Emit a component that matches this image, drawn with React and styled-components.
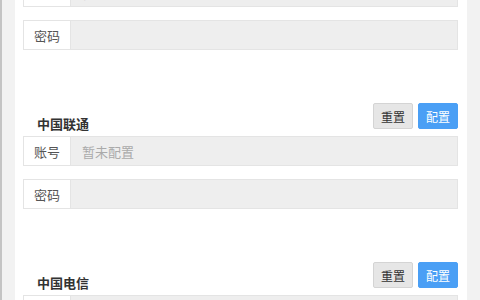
import styled, { createGlobalStyle } from "styled-components";

const Global = createGlobalStyle`
  html, body {
    margin: 0;
    padding: 0;
    background: #f2f2f2;
    overflow: hidden;
  }
  body {
    font-family: "Noto Sans CJK SC", "Noto Sans", sans-serif;
  }
`;

const Frame = styled.div`
  display: flex;
  height: 300px;
  width: 480px;
  overflow: hidden;
  border-left: 2px solid #c4c4c4;
  box-sizing: border-box;
`;

const Gutter = styled.div`
  width: ${(p) => p.$w}px;
  flex-shrink: 0;
  background: #f2f2f2;
`;

const Panel = styled.div`
  flex: 1;
  background: #fff;
  padding: 0 9px 0 8px;
  overflow: hidden;
`;

const Scroll = styled.div`
  margin-top: -56px;
  display: flex;
  flex-direction: column;
  gap: 53px;
`;

const Section = styled.div`
  display: flex;
  flex-direction: column;
`;

const Header = styled.div`
  display: flex;
  align-items: flex-end;
  justify-content: space-between;
  height: 26px;
  margin-bottom: 7px;
`;

const Title = styled.div`
  font-size: 13px;
  font-weight: bold;
  color: #333;
  padding-left: 14px;
  line-height: 16px;
  margin-bottom: -3px;
`;

const Buttons = styled.div`
  display: flex;
  gap: 5px;
`;

const Button = styled.button`
  width: 40px;
  height: 26px;
  padding: 0;
  border-radius: 2px;
  font-family: inherit;
  font-size: 12px;
  border: 1px solid ${(p) => (p.$primary ? "#4a9ff5" : "#d4d4d4")};
  background: ${(p) => (p.$primary ? "#4a9ff5" : "#e6e6e6")};
  color: ${(p) => (p.$primary ? "#fff" : "#333")};
`;

const Rows = styled.div`
  display: flex;
  flex-direction: column;
  gap: 13px;
`;

const Row = styled.div`
  display: flex;
  height: 30px;
  border: 1px solid #e4e4e4;
  box-sizing: border-box;
`;

const Label = styled.div`
  width: 46px;
  display: flex;
  align-items: center;
  justify-content: center;
  font-size: 13px;
  color: #555;
  background: #fff;
  border-right: 1px solid #e4e4e4;
`;

const Field = styled.div`
  flex: 1;
  display: flex;
  align-items: center;
  padding-left: 11px;
  background: #eeeeee;
  font-size: 13px;
  color: #aaa;
`;

const carriers = ["中国移动", "中国联通", "中国电信"];

export default function App() {
  return (
    <>
      <Global />
      <Frame>
        <Gutter $w={13} />
        <Panel>
          <Scroll>
            {carriers.map((name) => (
              <Section key={name}>
                <Header>
                  <Title>{name}</Title>
                  <Buttons>
                    <Button>重置</Button>
                    <Button $primary>配置</Button>
                  </Buttons>
                </Header>
                <Rows>
                  <Row>
                    <Label>账号</Label>
                    <Field>暂未配置</Field>
                  </Row>
                  <Row>
                    <Label>密码</Label>
                    <Field />
                  </Row>
                </Rows>
              </Section>
            ))}
          </Scroll>
        </Panel>
        <Gutter $w={13} />
      </Frame>
    </>
  );
}
